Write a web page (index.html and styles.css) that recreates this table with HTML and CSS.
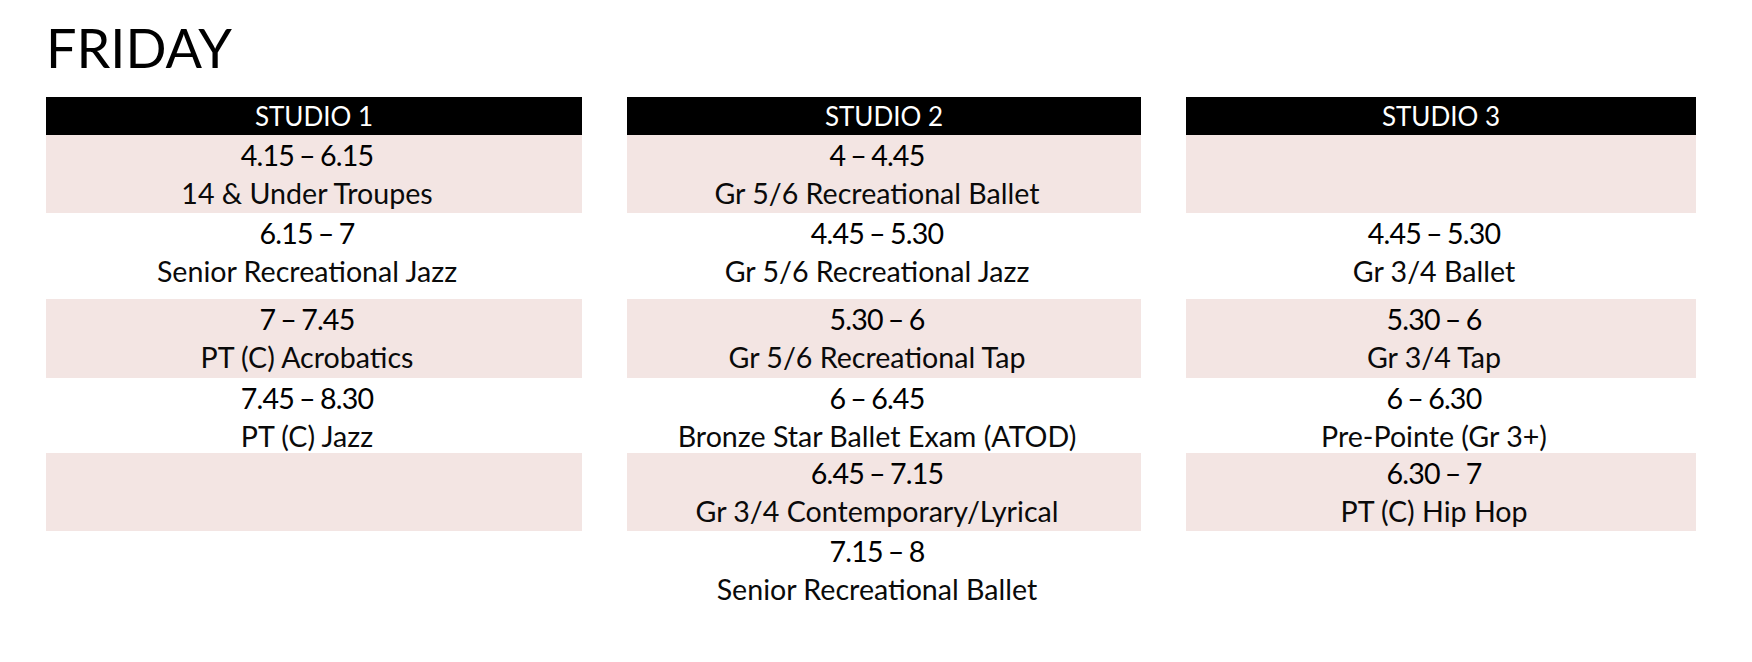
FILE: index.html
```html
<!DOCTYPE html>
<html lang="en">
<head>
<meta charset="utf-8">
<title>Friday Timetable</title>
<link rel="stylesheet" href="styles.css">
</head>
<body>
<main class="page">
  <h1 class="day">FRIDAY</h1>
  <div class="timetable">
    <div class="head">STUDIO 1</div>
    <div class="head">STUDIO 2</div>
    <div class="head">STUDIO 3</div>

    <div class="cell pink"><span class="time">4.15 – 6.15</span><span class="name">14 &amp; Under Troupes</span></div>
    <div class="cell pink"><span class="time">4 – 4.45</span><span class="name">Gr 5/6 Recreational Ballet</span></div>
    <div class="cell pink"></div>

    <div class="cell"><span class="time">6.15 – 7</span><span class="name">Senior Recreational Jazz</span></div>
    <div class="cell"><span class="time">4.45 – 5.30</span><span class="name">Gr 5/6 Recreational Jazz</span></div>
    <div class="cell"><span class="time">4.45 – 5.30</span><span class="name">Gr 3/4 Ballet</span></div>

    <div class="cell pink"><span class="time">7 – 7.45</span><span class="name">PT (C) Acrobatics</span></div>
    <div class="cell pink"><span class="time">5.30 – 6</span><span class="name">Gr 5/6 Recreational Tap</span></div>
    <div class="cell pink"><span class="time">5.30 – 6</span><span class="name">Gr 3/4 Tap</span></div>

    <div class="cell"><span class="time">7.45 – 8.30</span><span class="name">PT (C) Jazz</span></div>
    <div class="cell"><span class="time">6 – 6.45</span><span class="name">Bronze Star Ballet Exam (ATOD)</span></div>
    <div class="cell"><span class="time">6 – 6.30</span><span class="name">Pre-Pointe (Gr 3+)</span></div>

    <div class="cell pink"></div>
    <div class="cell pink"><span class="time">6.45 – 7.15</span><span class="name">Gr 3/4 Contemporary/Lyrical</span></div>
    <div class="cell pink"><span class="time">6.30 – 7</span><span class="name">PT (C) Hip Hop</span></div>

    <div class="cell"></div>
    <div class="cell"><span class="time">7.15 – 8</span><span class="name">Senior Recreational Ballet</span></div>
    <div class="cell"></div>
  </div>
</main>
</body>
</html>
```
FILE: styles.css
```css
html, body {
  margin: 0;
  padding: 0;
  background: #ffffff;
}

body {
  font-family: Lato, "Open Sans", sans-serif;
  color: #000000;
}

.page {
  padding: 18px 0 0 46px;
}

.day {
  margin: 0 0 19px 0;
  font-size: 54px;
  font-weight: 400;
  line-height: 60px;
  height: 60px;
  letter-spacing: 0;
}

.timetable {
  display: grid;
  grid-template-columns: 536px 514px 510px;
  grid-template-rows: 38px 78px 86px 79px 75px 78px 78px;
  column-gap: 45px;
}

.head {
  background: #000000;
  color: #ffffff;
  font-size: 26px;
  line-height: 38px;
  text-align: center;
}

.cell {
  display: flex;
  flex-direction: column;
  align-items: center;
  padding: 1px 14px 0 0;
  font-size: 28.6px;
  line-height: 38px;
  text-align: center;
}

.cell.pink {
  background: #f3e5e3;
}

.time,
.name {
  display: block;
  white-space: nowrap;
}

.time {
  letter-spacing: -0.8px;
  word-spacing: -1.5px;
  color: #000000;
}

.name {
  color: #0a0a0a;
}
```
